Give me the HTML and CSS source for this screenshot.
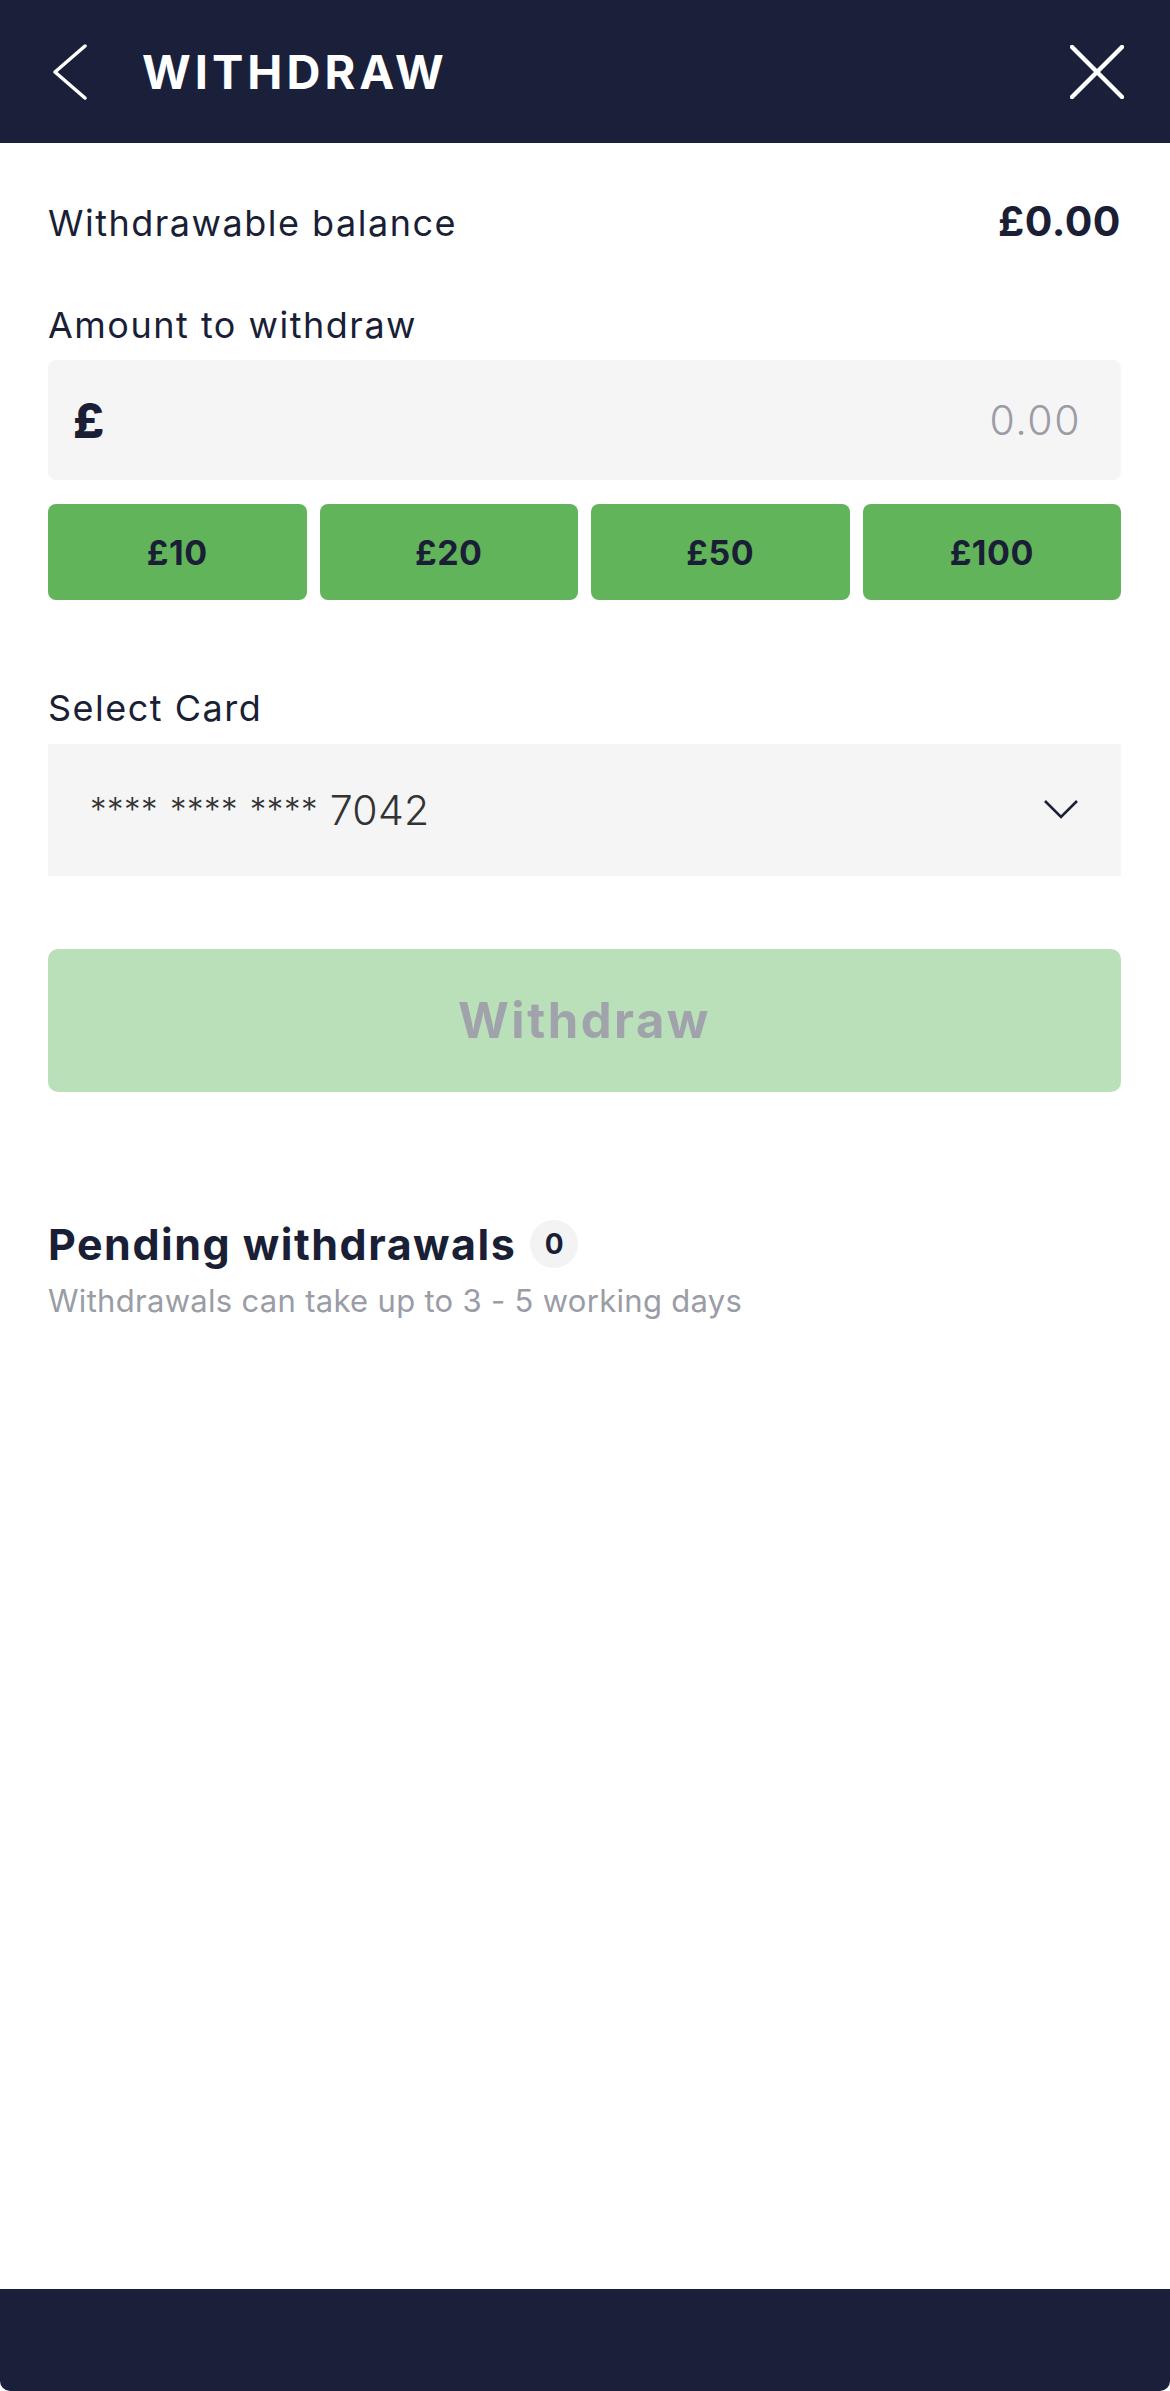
FILE: index.html
```html
<!DOCTYPE html>
<html lang="en">
<head>
<meta charset="utf-8">
<title>Withdraw</title>
<link rel="stylesheet" href="styles.css">
</head>
<body>
<div class="page">
  <header class="topbar">
    <button class="icon-btn back" aria-label="Back">
      <svg width="36" height="56" viewBox="0 0 36 56"><polyline points="33,2 3,28 33,54" fill="none" stroke="#ffffff" stroke-width="3.5" stroke-linecap="round" stroke-linejoin="round"/></svg>
    </button>
    <h1 class="title">WITHDRAW</h1>
    <button class="icon-btn close" aria-label="Close">
      <svg width="54" height="54" viewBox="0 0 54 54"><path d="M2 2 L52 52 M52 2 L2 52" fill="none" stroke="#ffffff" stroke-width="4.5" stroke-linecap="round"/></svg>
    </button>
  </header>

  <main class="content">
    <div class="balance-row">
      <span class="label">Withdrawable balance</span>
      <span class="balance">£0.00</span>
    </div>

    <div class="label amount-label">Amount to withdraw</div>
    <div class="amount-input">
      <span class="currency">£</span>
      <span class="placeholder">0.00</span>
    </div>

    <div class="quick">
      <button class="quick-btn">£10</button>
      <button class="quick-btn">£20</button>
      <button class="quick-btn">£50</button>
      <button class="quick-btn">£100</button>
    </div>

    <div class="label card-label">Select Card</div>
    <div class="select">
      <span class="card-num"><span class="stars">****</span> <span class="stars">****</span> <span class="stars">****</span> 7042</span>
      <svg class="chev" width="36" height="22" viewBox="0 0 36 22"><polyline points="2,2 18,18 34,2" fill="none" stroke="#1a2039" stroke-width="2.6"/></svg>
    </div>

    <button class="withdraw-btn">Withdraw</button>

    <section class="pending">
      <div class="pending-head">
        <h2 class="pending-title">Pending withdrawals</h2>
        <span class="badge">0</span>
      </div>
      <p class="pending-sub">Withdrawals can take up to 3 - 5 working days</p>
    </section>
  </main>

  <footer class="bottombar"></footer>
</div>
</body>
</html>
```

FILE: styles.css
```css
* { box-sizing: border-box; }
html, body { margin: 0; padding: 0; background: #ffffff; }
body {
  font-family: Inter, "Open Sans", "Liberation Sans", sans-serif;
  color: #1a1f36;
}
.page {
  width: 1170px;
  min-height: 2391px;
  display: flex;
  flex-direction: column;
}
.topbar {
  height: 143px;
  background: #1a2039;
  display: flex;
  align-items: center;
  padding: 0 46px 0 52px;
}
.icon-btn {
  background: none;
  border: 0;
  padding: 0;
  display: flex;
  align-items: center;
  justify-content: center;
}
.back { width: 36px; height: 56px; }
.title {
  margin: 0 0 0 54px;
  color: #ffffff;
  font-size: 47px;
  font-weight: 700;
  letter-spacing: 4px;
  flex: 1;
}
.close { width: 54px; height: 54px; }

.content {
  flex: 1;
  padding: 58px 49px 0 48px;
}
.label {
  font-size: 36px;
  line-height: 40px;
  font-weight: 400;
  letter-spacing: 1.5px;
  color: #1a1f36;
}
.balance-row {
  display: flex;
  justify-content: space-between;
  align-items: baseline;
}
.balance {
  font-size: 41px;
  line-height: 40px;
  font-weight: 700;
  letter-spacing: 0.5px;
}
.amount-label { margin-top: 62px; }
.amount-input {
  margin-top: 15px;
  height: 120px;
  background: #f5f5f5;
  border-radius: 8px;
  display: flex;
  align-items: center;
  justify-content: space-between;
  padding: 0 40px 0 25px;
}
.currency {
  font-size: 48px;
  font-weight: 800;
  color: #1a1f36;
}
.placeholder {
  font-size: 41px;
  font-weight: 300;
  letter-spacing: 1.5px;
  color: #9a9ca6;
}
.quick {
  margin-top: 24px;
  display: grid;
  grid-template-columns: repeat(4, 1fr);
  gap: 13px;
}
.quick-btn {
  height: 96px;
  border: 0;
  border-radius: 8px;
  background: #62b45a;
  font-family: inherit;
  font-size: 34px;
  font-weight: 700;
  letter-spacing: 0.5px;
  color: #1a1f36;
}
.card-label { margin-top: 88px; }
.select {
  margin-top: 16px;
  height: 132px;
  background: #f5f5f5;
  display: flex;
  align-items: center;
  justify-content: space-between;
  padding: 0 42px 0 42px;
}
.card-num {
  font-size: 41px;
  font-weight: 300;
  letter-spacing: 0.3px;
  color: #333333;
}
.stars { font-size: 33px; vertical-align: 4px; letter-spacing: 0.5px; }
.withdraw-btn {
  display: block;
  width: 100%;
  margin-top: 73px;
  height: 143px;
  border: 0;
  border-radius: 10px;
  background: #b9e0b8;
  font-family: inherit;
  font-size: 49px;
  font-weight: 700;
  letter-spacing: 2.5px;
  color: #a0a3ab;
}
.pending { margin-top: 127px; }
.pending-head {
  display: flex;
  align-items: center;
  gap: 14px;
}
.pending-title {
  margin: 0;
  font-size: 43px;
  line-height: 50px;
  font-weight: 700;
  letter-spacing: 1.5px;
  color: #1a1f36;
}
.badge {
  width: 48px;
  height: 48px;
  border-radius: 50%;
  background: #f3f3f4;
  display: flex;
  align-items: center;
  justify-content: center;
  font-size: 28px;
  font-weight: 700;
  color: #1a1f36;
}
.pending-sub {
  margin: 14px 0 0;
  font-size: 31px;
  line-height: 36px;
  font-weight: 400;
  letter-spacing: 0.3px;
  color: #9a9ca6;
}
.bottombar {
  height: 102px;
  background: #1a2039;
  border-radius: 0 0 10px 10px;
}
```
